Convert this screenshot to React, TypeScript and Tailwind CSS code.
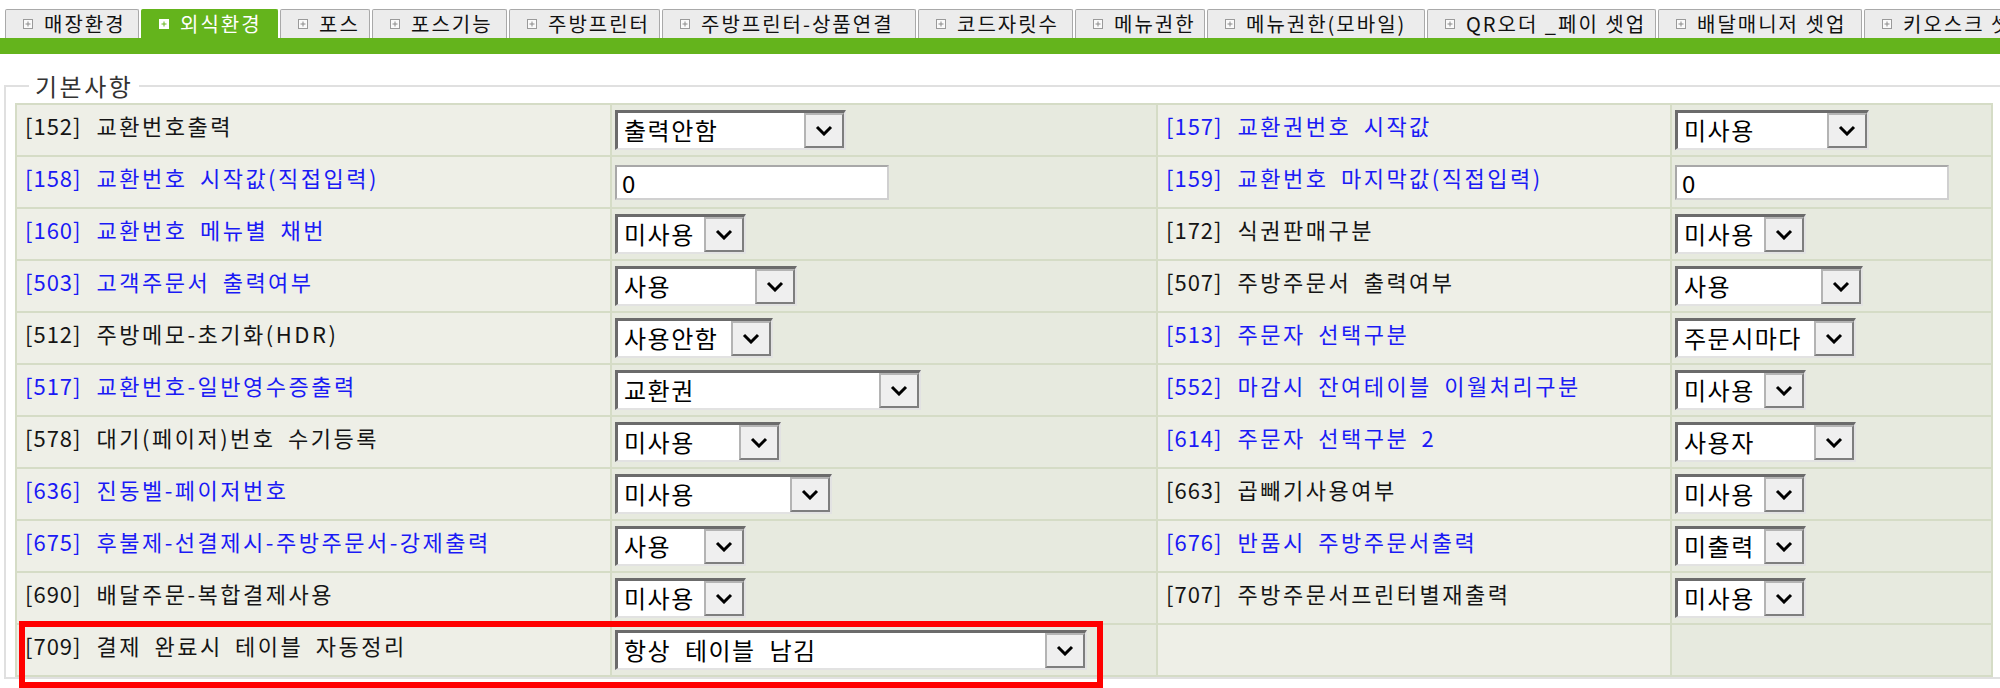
type Ctl =
  | { kind: "select"; value: string; w: string }
  | { kind: "input"; value: string; w: string };

type Label = { code: string; text: string; blue?: boolean };

type Row = {
  left: Label;
  leftCtl: Ctl;
  right?: Label;
  rightCtl?: Ctl;
};

const tabs = [
  { name: "매장환경", w: "w-[134px]" },
  { name: "외식환경", w: "w-[137px]", active: true },
  { name: "포스", w: "w-[90px]" },
  { name: "포스기능", w: "w-[135px]" },
  { name: "주방프린터", w: "w-[151px]" },
  { name: "주방프린터-상품연결", w: "w-[254px]" },
  { name: "코드자릿수", w: "w-[155px]" },
  { name: "메뉴권한", w: "w-[130px]" },
  { name: "메뉴권한(모바일)", w: "w-[218px]" },
  { name: "QR오더 _페이 셋업", w: "w-[229px]" },
  { name: "배달매니저 셋업", w: "w-[204px]" },
  { name: "키오스크 셋업", w: "w-[200px]" },
];

const rows: Row[] = [
  {
    left: { code: "152", text: "교환번호출력" },
    leftCtl: { kind: "select", value: "출력안함", w: "w-[231px]" },
    right: { code: "157", text: "교환권번호 시작값", blue: true },
    rightCtl: { kind: "select", value: "미사용", w: "w-[194px]" },
  },
  {
    left: { code: "158", text: "교환번호 시작값(직접입력)", blue: true },
    leftCtl: { kind: "input", value: "0", w: "w-[274px]" },
    right: { code: "159", text: "교환번호 마지막값(직접입력)", blue: true },
    rightCtl: { kind: "input", value: "0", w: "w-[274px]" },
  },
  {
    left: { code: "160", text: "교환번호 메뉴별 채번", blue: true },
    leftCtl: { kind: "select", value: "미사용", w: "w-[131px]" },
    right: { code: "172", text: "식권판매구분" },
    rightCtl: { kind: "select", value: "미사용", w: "w-[131px]" },
  },
  {
    left: { code: "503", text: "고객주문서 출력여부", blue: true },
    leftCtl: { kind: "select", value: "사용", w: "w-[182px]" },
    right: { code: "507", text: "주방주문서 출력여부" },
    rightCtl: { kind: "select", value: "사용", w: "w-[188px]" },
  },
  {
    left: { code: "512", text: "주방메모-초기화(HDR)" },
    leftCtl: { kind: "select", value: "사용안함", w: "w-[158px]" },
    right: { code: "513", text: "주문자 선택구분", blue: true },
    rightCtl: { kind: "select", value: "주문시마다", w: "w-[181px]" },
  },
  {
    left: { code: "517", text: "교환번호-일반영수증출력", blue: true },
    leftCtl: { kind: "select", value: "교환권", w: "w-[306px]" },
    right: { code: "552", text: "마감시 잔여테이블 이월처리구분", blue: true },
    rightCtl: { kind: "select", value: "미사용", w: "w-[131px]" },
  },
  {
    left: { code: "578", text: "대기(페이저)번호 수기등록" },
    leftCtl: { kind: "select", value: "미사용", w: "w-[166px]" },
    right: { code: "614", text: "주문자 선택구분 2", blue: true },
    rightCtl: { kind: "select", value: "사용자", w: "w-[181px]" },
  },
  {
    left: { code: "636", text: "진동벨-페이저번호", blue: true },
    leftCtl: { kind: "select", value: "미사용", w: "w-[217px]" },
    right: { code: "663", text: "곱빼기사용여부" },
    rightCtl: { kind: "select", value: "미사용", w: "w-[131px]" },
  },
  {
    left: { code: "675", text: "후불제-선결제시-주방주문서-강제출력", blue: true },
    leftCtl: { kind: "select", value: "사용", w: "w-[131px]" },
    right: { code: "676", text: "반품시 주방주문서출력", blue: true },
    rightCtl: { kind: "select", value: "미출력", w: "w-[131px]" },
  },
  {
    left: { code: "690", text: "배달주문-복합결제사용" },
    leftCtl: { kind: "select", value: "미사용", w: "w-[131px]" },
    right: { code: "707", text: "주방주문서프린터별재출력" },
    rightCtl: { kind: "select", value: "미사용", w: "w-[131px]" },
  },
  {
    left: { code: "709", text: "결제 완료시 테이블 자동정리" },
    leftCtl: { kind: "select", value: "항상  테이블  남김", w: "w-[472px]" },
  },
];

function PlusBox({ active }: { active?: boolean }) {
  return (
    <svg width="10" height="10" viewBox="0 0 10 10" className="shrink-0">
      <rect
        x="0.5"
        y="0.5"
        width="9"
        height="9"
        fill={active ? "#ffffff" : "#fafafa"}
        stroke={active ? "#ffffff" : "#9a9a9a"}
      />
      <path d="M5 2.5v5M2.5 5h5" stroke={active ? "#64b41c" : "#8a8a8a"} strokeWidth="1" />
    </svg>
  );
}

function Chevron() {
  return (
    <svg width="18" height="11" viewBox="0 0 18 11">
      <path d="M2 2l7 7 7-7" fill="none" stroke="#000" strokeWidth="3" />
    </svg>
  );
}

function Control({ ctl }: { ctl: Ctl }) {
  if (ctl.kind === "input") {
    return (
      <div
        className={`${ctl.w} h-[35px] bg-white border-2 border-[#a8a8a8] border-b-[#d0d0d0] border-r-[#d0d0d0] pl-[5px] text-[24px] leading-[31px] text-black`}
      >
        {ctl.value}
      </div>
    );
  }
  return (
    <div
      className={`${ctl.w} h-[40px] flex bg-white border-t-[3px] border-l-[3px] border-t-[#6b6b6b] border-l-[#6b6b6b] border-b-2 border-r-2 border-b-[#e2e2e2] border-r-[#e2e2e2]`}
    >
      <span className="flex-1 min-w-0 overflow-hidden whitespace-pre pl-[6px] text-[24px] leading-[34px] tracking-[1.5px] text-black">
        {ctl.value}
      </span>
      <span className="w-[40px] shrink-0 flex items-center justify-center bg-[#efefef] border-2 border-[#b4b4b4] border-r-[#7e7e7e] border-b-[#7e7e7e]">
        <Chevron />
      </span>
    </div>
  );
}

function LabelCell({ label }: { label?: Label }) {
  return (
    <div
      className={`h-[50px] bg-[#eeefe7] pl-[8px] pt-[7px] text-[22px] leading-[26px] whitespace-nowrap ${
        label?.blue ? "text-[#1a1af5]" : "text-[#151515]"
      }`}
    >
      {label && (
        <div className="flex gap-[15px]">
          <span className="tracking-[1px]">[{label.code}]</span>
          <span className="tracking-[2.5px] [word-spacing:5px]">{label.text}</span>
        </div>
      )}
    </div>
  );
}

function ControlCell({ ctl }: { ctl?: Ctl }) {
  return (
    <div className="h-[50px] bg-[#e7eadf] pl-[3px] flex items-center">
      {ctl && <Control ctl={ctl} />}
    </div>
  );
}

export default function App() {
  return (
    <div className="w-[2000px] h-[688px] overflow-hidden bg-white font-['Noto_Sans_CJK_KR',sans-serif]">
      {/* tab strip */}
      <div className="pt-[9px] pl-[5px] flex gap-[2px] overflow-hidden whitespace-nowrap">
        {tabs.map((t) => (
          <div
            key={t.name}
            className={`${t.w} shrink-0 h-[29px] flex items-center gap-[11px] pl-[17px] rounded-t-[2px] border border-b-0 text-[20px] tracking-[2px] ${
              t.active
                ? "bg-[#64b41c] border-[#64b41c] text-white"
                : "bg-[#ececec] border-[#a9a9a9] text-[#111]"
            }`}
          >
            <PlusBox active={t.active} />
            <span>{t.name}</span>
          </div>
        ))}
      </div>
      <div className="h-[16px] bg-[#64b41c]" />

      {/* 기본사항 */}
      <fieldset className="w-[2020px] ml-[4px] mt-[17px] border-2 border-[#e0e0e0] pl-[9px] pt-[2px]">
        <legend className="ml-[14px] px-[6px] text-[24px] leading-[30px] tracking-[2.5px] text-[#333]">
          기본사항
        </legend>
        <div className="relative w-fit">
          <div className="grid grid-cols-[593px_544px_512px_319px] gap-[2px] p-[2px] bg-[#d5dcc6]">
            {rows.map((r) => (
              <div key={r.left.code} className="contents">
                <LabelCell label={r.left} />
                <ControlCell ctl={r.leftCtl} />
                <LabelCell label={r.right} />
                <ControlCell ctl={r.rightCtl} />
              </div>
            ))}
          </div>
          {/* highlight on row 709 */}
          <div className="absolute left-[4px] top-[518px] w-[1084px] h-[67px] border-[6px] border-[#ff0000]" />
        </div>
      </fieldset>
    </div>
  );
}
